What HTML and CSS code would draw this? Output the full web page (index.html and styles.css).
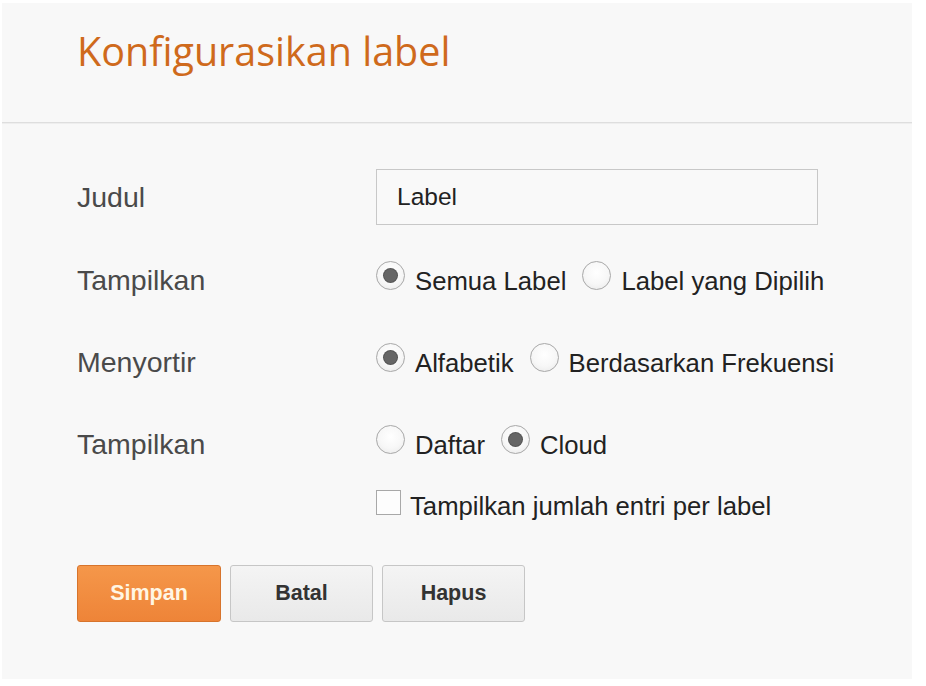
FILE: index.html
```html
<!DOCTYPE html>
<html lang="id">
<head>
<meta charset="utf-8">
<title>Konfigurasikan label</title>
<link rel="stylesheet" href="styles.css">
</head>
<body>
<div class="panel">
  <header class="head">
    <h1 class="title">Konfigurasikan label</h1>
  </header>
  <form class="form">
    <div class="row row-input">
      <div class="lbl">Judul</div>
      <div class="field"><div class="input">Label</div></div>
    </div>
    <div class="row">
      <div class="lbl">Tampilkan</div>
      <div class="field">
        <span class="opt"><span class="radio on"></span><span class="txt">Semua Label</span></span><span class="opt"><span class="radio"></span><span class="txt">Label yang Dipilih</span></span>
      </div>
    </div>
    <div class="row">
      <div class="lbl">Menyortir</div>
      <div class="field">
        <span class="opt"><span class="radio on"></span><span class="txt">Alfabetik</span></span><span class="opt"><span class="radio"></span><span class="txt">Berdasarkan Frekuensi</span></span>
      </div>
    </div>
    <div class="row">
      <div class="lbl">Tampilkan</div>
      <div class="field">
        <div class="line"><span class="opt"><span class="radio"></span><span class="txt">Daftar</span></span><span class="opt"><span class="radio on"></span><span class="txt">Cloud</span></span></div>
        <div class="line check-line"><span class="opt"><span class="check"></span><span class="txt">Tampilkan jumlah entri per label</span></span></div>
      </div>
    </div>
    <div class="buttons">
      <span class="btn primary">Simpan</span>
      <span class="btn">Batal</span>
      <span class="btn">Hapus</span>
    </div>
  </form>
</div>
</body>
</html>
```

FILE: styles.css
```css
html, body {
  margin: 0;
  padding: 0;
  background: #ffffff;
}

.panel {
  margin: 3px 0 0 2px;
  width: 910px;
  height: 676px;
  background: #f8f8f8;
  overflow: hidden;
}

.head {
  height: 119px;
  border-bottom: 1px solid #dedede;
  box-shadow: 0 1px 0 #eeeeee;
  padding-left: 75px;
}

.title {
  margin: 0;
  padding-top: 22px;
  font-family: "Open Sans", sans-serif;
  font-weight: 400;
  font-size: 39.5px;
  line-height: 52px;
  color: #cf6a1c;
}

.form {
  padding: 46px 0 0 75px;
  font-family: "Liberation Sans", Arial, sans-serif;
}

.row {
  display: flex;
  align-items: baseline;
  margin-bottom: 49px;
}

.row-input {
  align-items: center;
  margin-bottom: 39px;
}

.lbl {
  width: 299px;
  flex: none;
  font-size: 28.5px;
  color: #4a4a4a;
  line-height: 32px;
}

.field {
  font-size: 25.7px;
  line-height: 32px;
  color: #222222;
}

.input {
  box-sizing: border-box;
  width: 442px;
  height: 56px;
  border: 1px solid #c8c8c8;
  background: #f9f9f9;
  padding-left: 20px;
  font-size: 24.5px;
  line-height: 54px;
  color: #222222;
}

.opt {
  margin-right: 16px;
  white-space: nowrap;
}

.radio {
  display: inline-block;
  position: relative;
  box-sizing: border-box;
  width: 29px;
  height: 29px;
  margin-top: -8px;
  border: 1px solid #a8a8a8;
  border-radius: 50%;
  background: radial-gradient(circle at 50% 40%, #ffffff 0%, #f7f7f7 55%, #e6e6e6 100%);
  vertical-align: baseline;
  margin-right: 10px;
}

.radio.on::after {
  content: "";
  position: absolute;
  left: 7px;
  top: 7px;
  width: 13px;
  height: 13px;
  border-radius: 50%;
  background: #666666;
  box-shadow: 0 0 0 1px #555555;
}

.check {
  display: inline-block;
  box-sizing: border-box;
  width: 25px;
  height: 25px;
  margin-top: -4px;
  border: 1px solid #a8a8a8;
  background: #fdfdfd;
  vertical-align: baseline;
  margin-right: 9px;
}

.check-line {
  margin-top: 29px;
}

.buttons {
  display: flex;
  gap: 9px;
  margin-top: -6px;
}

.btn {
  box-sizing: border-box;
  width: 143px;
  height: 57px;
  border: 1px solid #c6c6c6;
  border-radius: 3px;
  background: linear-gradient(#f4f4f4, #e9e9e9);
  display: flex;
  align-items: center;
  justify-content: center;
  font-family: "Liberation Sans", Arial, sans-serif;
  font-weight: 700;
  font-size: 21.5px;
  color: #333333;
}

.btn.primary {
  width: 144px;
  background: linear-gradient(#f5974a, #ee8438);
  border-color: #d7742c;
  color: #fff6e4;
}
```
